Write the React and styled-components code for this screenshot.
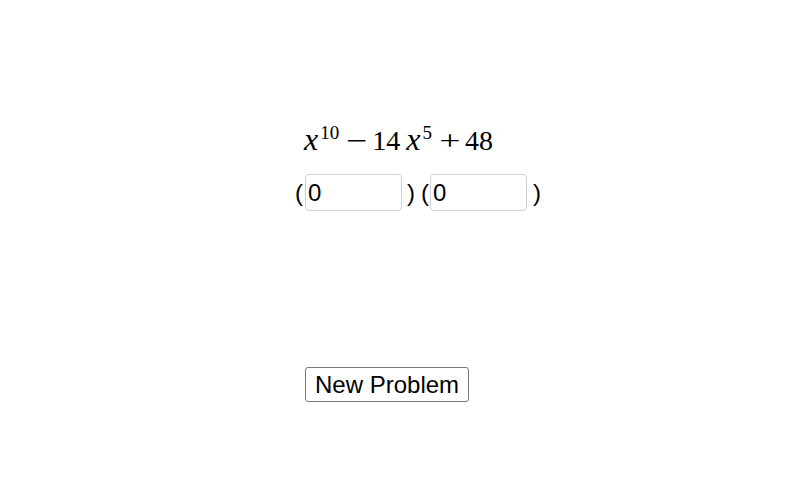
import React from "react";
import styled, { createGlobalStyle } from "styled-components";

const GlobalStyle = createGlobalStyle`
  html, body {
    margin: 0;
    padding: 0;
    background: #fff;
  }
`;

const Page = styled.div`
  width: 800px;
  height: 503px;
  box-sizing: border-box;
  padding: 117px 0 0 295px;
  display: flex;
  flex-direction: column;
  font-family: "Liberation Sans", Arial, sans-serif;
  color: #000;
  overflow: hidden;
`;

const Formula = styled.div`
  margin-left: 9px;
  height: 44px;
  display: flex;
  align-items: baseline;
  font-family: "Liberation Serif", "DejaVu Serif", serif;
  font-size: 28px;
  line-height: 44px;
  white-space: pre;
`;

const Var = styled.span`
  font-style: italic;
  font-size: 32px;
`;

const Sup = styled.span`
  font-size: 19px;
  line-height: 0;
  position: relative;
  top: -11px;
  margin-left: 2px;
`;

const Op = styled.span`
  display: inline-block;
  width: 22px;
  text-align: center;
  transform: scaleX(1.35);
  margin: 0 4px 0 7px;
`;

const Num = styled.span`
  margin-right: ${(p) => p.$right || 0}px;
`;

const Row = styled.div`
  margin-top: 13px;
  display: flex;
  align-items: center;
  font-size: 24px;
`;

const Paren = styled.span`
  margin: 0 ${(p) => p.$right || 0}px 0 ${(p) => p.$left || 0}px;
`;

const Box = styled.input`
  width: 97px;
  height: 37px;
  box-sizing: border-box;
  border: 1px solid #d0d0d0;
  border-radius: 4px;
  padding: 0 2px;
  font-family: "Liberation Sans", Arial, sans-serif;
  font-size: 24px;
  color: #000;
  background: #fff;
  outline: none;
`;

const Button = styled.button`
  margin: 156px 0 0 10px;
  align-self: flex-start;
  height: 35px;
  padding: 0 9px;
  border: 1px solid #777;
  border-radius: 3px;
  background: #fff;
  font-family: "Liberation Sans", Arial, sans-serif;
  font-size: 24px;
  color: #000;
  cursor: pointer;
`;

export default function App() {
  return (
    <Page>
      <GlobalStyle />
      <Formula>
        <Var>x</Var>
        <Sup>10</Sup>
        <Op>−</Op>
        <Num $right={6}>14</Num>
        <Var>x</Var>
        <Sup>5</Sup>
        <Op>+</Op>
        <Num>48</Num>
      </Formula>
      <Row>
        <Paren $right={2}>(</Paren>
        <Box defaultValue="0" />
        <Paren $left={5} $right={2}>)</Paren>
        <Paren $left={4} $right={1}>(</Paren>
        <Box defaultValue="0" />
        <Paren $left={6}>)</Paren>
      </Row>
      <Button>New Problem</Button>
    </Page>
  );
}
